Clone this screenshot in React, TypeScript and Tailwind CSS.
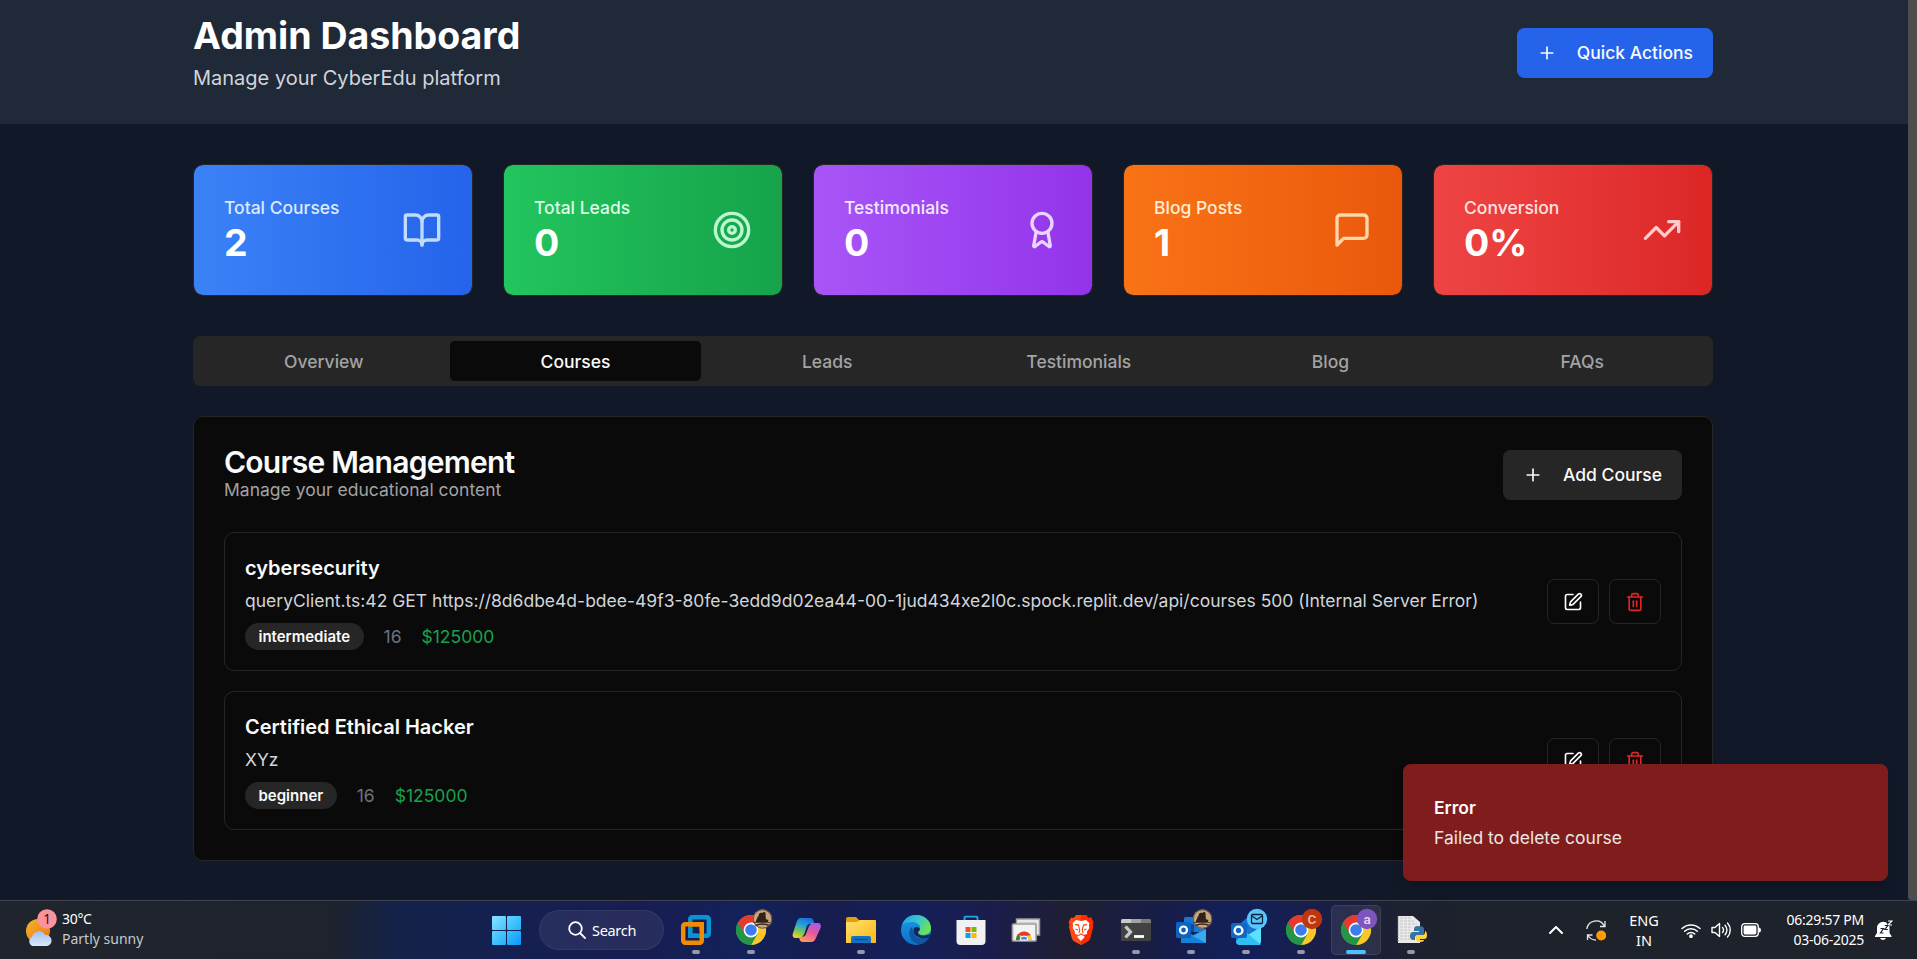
import React from "react";
import { Award, BookOpen, Plus, SquarePen, Target, Trash2, TrendingUp } from "lucide-react";

const stats = [
  { label: "Total Courses", value: "2", bg: "from-[#3b82f6] to-[#2563eb]", tone: "text-[#dbeafe]", icon: <BookOpen className="size-10 text-[#bfdbfe]" /> },
  { label: "Total Leads", value: "0", bg: "from-[#22c55e] to-[#16a34a]", tone: "text-[#dcfce7]", icon: <Target className="size-10 text-[#bbf7d0]" /> },
  { label: "Testimonials", value: "0", bg: "from-[#a855f7] to-[#9333ea]", tone: "text-[#f3e8ff]", icon: <Award className="size-10 text-[#e9d5ff]" /> },
  {
    label: "Blog Posts",
    value: "1",
    bg: "from-[#f97316] to-[#ea580c]",
    tone: "text-[#ffedd5]",
    icon: (
      <svg viewBox="0 0 24 24" className="size-10 text-[#fed7aa]" fill="none" stroke="currentColor" strokeWidth="2" strokeLinecap="round" strokeLinejoin="round">
        <path d="M21 15a2 2 0 0 1-2 2H7l-4 4V5a2 2 0 0 1 2-2h14a2 2 0 0 1 2 2z" />
      </svg>
    ),
  },
  { label: "Conversion", value: "0%", bg: "from-[#ef4444] to-[#dc2626]", tone: "text-[#fee2e2]", icon: <TrendingUp className="size-10 text-[#fecaca]" /> },
];

const tabs = ["Overview", "Courses", "Leads", "Testimonials", "Blog", "FAQs"];

const courses = [
  {
    title: "cybersecurity",
    desc: "queryClient.ts:42 GET https://8d6dbe4d-bdee-49f3-80fe-3edd9d02ea44-00-1jud434xe2l0c.spock.replit.dev/api/courses 500 (Internal Server Error)",
    level: "intermediate",
  },
  { title: "Certified Ethical Hacker", desc: "XYz", level: "beginner" },
];

function Header() {
  return (
    <header className="flex h-[124px] shrink-0 border-b border-[#1f2937] bg-[#1f2937] pt-[12.5px]">
      <div className="ml-[193px] flex h-20 w-[1520px] items-center justify-between">
        <div>
          <h1 className="text-[37.5px] leading-[45px] font-bold text-white">Admin Dashboard</h1>
          <p className="mt-[5px] text-[20px] leading-[30px] text-[#d1d5db]">Manage your CyberEdu platform</p>
        </div>
        <button className="flex h-[50px] items-center gap-5 rounded-[7.5px] bg-[#2563eb] px-5 text-[17.5px] font-medium text-[#f8fafc]">
          <Plus className="size-5" />
          <span className="pt-[2px]">Quick Actions</span>
        </button>
      </div>
    </header>
  );
}

function Stats() {
  return (
    <div className="grid grid-cols-5 gap-[30px]">
      {stats.map((s) => (
        <div key={s.label} className={`flex h-[132px] items-center justify-between rounded-[10px] border border-[#262626] bg-gradient-to-r bg-clip-padding px-[30px] ${s.bg}`}>
          <div>
            <p className={`text-[17.5px] leading-[25px] font-medium ${s.tone}`}>{s.label}</p>
            <p className="text-[37.5px] leading-[45px] font-bold text-white">{s.value}</p>
          </div>
          {s.icon}
        </div>
      ))}
    </div>
  );
}

function Tabs() {
  return (
    <div className="mt-10 grid h-[50px] grid-cols-6 rounded-[7.5px] bg-[#262626] p-[5px]">
      {tabs.map((t) => (
        <div
          key={t}
          className={`flex items-center justify-center rounded-[5px] pt-[2px] text-[17.5px] font-medium ${t === "Courses" ? "bg-[#0a0a0a] text-[#fafafa]" : "text-[#a3a3a3]"}`}
        >
          {t}
        </div>
      ))}
    </div>
  );
}

function CourseRow({ title, desc, level }: { title: string; desc: string; level: string }) {
  return (
    <div className="flex h-[139px] items-center justify-between rounded-[10px] border border-[#262626] px-5">
      <div>
        <h3 className="text-[20px] leading-[30px] font-semibold text-[#fafafa]">{title}</h3>
        <p className="mt-[5px] text-[17.5px] leading-[25px] text-[#d1d5db]">{desc}</p>
        <div className="mt-[10px] flex h-[27px] items-center gap-5 text-[17.5px]">
          <span className="flex h-[27px] items-center rounded-full bg-[#262626] px-[13.5px] pt-[1px] text-[15px] font-semibold text-[#fafafa]">{level}</span>
          <span className="pt-[2px] text-[#6b7280]">16</span>
          <span className="pt-[2px] text-[#16a34a]">$125000</span>
        </div>
      </div>
      <div className="flex gap-[10px]">
        <button className="flex h-[45px] w-[52px] items-center justify-center rounded-[7.5px] border border-[#262626] text-[#fafafa]">
          <SquarePen className="size-5" />
        </button>
        <button className="flex h-[45px] w-[52px] items-center justify-center rounded-[7.5px] border border-[#262626] text-[#dc2626]">
          <Trash2 className="size-5" />
        </button>
      </div>
    </div>
  );
}

function Courses() {
  return (
    <section className="mt-[30px] h-[445px] rounded-[10px] border border-[#262626] bg-[#0a0a0a] px-[30px] pt-[30px]">
      <div className="flex h-[56px] items-center justify-between">
        <div className="pb-[2px]">
          <h2 className="text-[30px] leading-[30px] font-semibold tracking-tight text-[#fafafa]">Course Management</h2>
          <p className="text-[17.5px] leading-[25px] text-[#a3a3a3]">Manage your educational content</p>
        </div>
        <button className="flex h-[50px] items-center gap-5 rounded-[7.5px] bg-[#262626] px-5 text-[17.5px] font-medium text-[#fafafa]">
          <Plus className="size-5" />
          Add Course
        </button>
      </div>
      <div className="mt-[29px] flex flex-col gap-5">
        {courses.map((c) => (
          <CourseRow key={c.title} {...c} />
        ))}
      </div>
    </section>
  );
}

function ChromeArt() {
  return (
    <g>
      <circle cx="15" cy="15" r="15" fill="#34a350" />
      <path d="M2 7.5A15 15 0 0 1 28 7.5H15L8.5 18.7Z" fill="#e8392f" />
      <path d="M28 7.5A15 15 0 0 1 15 30L21.5 18.7 21.5 11.2 15 7.5Z" fill="#fcc529" />
      <path d="M2 7.5A15 15 0 0 0 15 30L21.5 18.7H8.5Z" fill="#249447" />
      <circle cx="15" cy="15" r="7.4" fill="#fff" />
      <circle cx="15" cy="15" r="5.8" fill="#3b7df0" />
    </g>
  );
}

function PortraitBadge() {
  return (
    <g transform="translate(26.5 4)">
      <circle r="9.7" fill="#c9a67d" />
      <path d="M-8 4C-6 3-6-1-4-3c0-3 2-4 4-3 1-2 4-1 3 2 0 2 1 3 0 4l3 1-1 3H-7Z" fill="#30231c" />
      <path d="M-9.500 3.500H8" stroke="#5b4332" />
      <path d="M-7 6.500Q0 3.500 7 6.500" fill="none" stroke="#30231c" strokeWidth="1.500" />
      <circle r="9.200" fill="none" stroke="#57432f" strokeWidth=".8" />
    </g>
  );
}

function LetterBadge({ letter, fill, color }: { letter: string; fill: string; color: string }) {
  return (
    <g transform="translate(26 4)">
      <circle r="10.200" fill={fill} />
      <text y="4.600" textAnchor="middle" fontSize="13.500" fontWeight="600" fill={color} fontFamily="Roboto, sans-serif">{letter}</text>
    </g>
  );
}

function OutlookArt({ bright }: { bright?: boolean }) {
  return bright ? (
    <g>
      <path d="M5 12 17 2 30 12V26a4 4 0 0 1-4 4H9a4 4 0 0 1-4-4Z" fill="#1b72cf" />
      <path d="M5 27 30 12V26a4 4 0 0 1-4 4H9Z" fill="#5ce1fa" />
      <path d="M14 16 30 30H9a4 4 0 0 1-4-4Z" fill="#31bff2" />
      <rect y="8" width="16" height="15" rx="2" fill="#0f68c8" />
      <circle cx="7.500" cy="15.500" r="3.900" fill="none" stroke="#fff" strokeWidth="2.400" />
    </g>
  ) : (
    <g>
      <rect x="8" y="2" width="20" height="15" rx="1.500" fill="#1877d2" />
      <path d="M8 9h10v8H8z" fill="#0a4d9f" />
      <path d="M18 2h10v7H18z" fill="#35b8f1" />
      <path d="M5 14 17 20 30 14V28H5Z" fill="#1c8ce1" />
      <path d="M5 28 30 14V28Z" fill="#38a9ee" />
      <path d="M5 15 30 28H5Z" fill="#1680d8" />
      <rect y="7" width="15" height="16" rx="1.500" fill="#0c64c0" />
      <circle cx="7.500" cy="15" r="3.500" fill="none" stroke="#fff" strokeWidth="2.200" />
    </g>
  );
}

type App = { name: string; art: React.ReactNode; dot?: boolean; active?: boolean };

const apps: App[] = [
  {
    name: "VMware Workstation",
    dot: true,
    art: (
      <g fill="none" strokeWidth="4.400">
        <rect x="9.200" y="2.200" width="18.600" height="18.600" rx="2" stroke="#0895d6" />
        <rect x="2.200" y="9.200" width="18.600" height="18.600" rx="2" stroke="#f38b00" />
        <path d="M9.200 13V20.800H16" stroke="#0895d6" />
        <path d="M7 9.200H20.800V16" stroke="#f38b00" />
      </g>
    ),
  },
  { name: "Chrome", dot: true, art: <g><ChromeArt /><PortraitBadge /></g> },
  {
    name: "Copilot",
    art: (
      <g transform="translate(1 2)">
        <path d="M9 1h9c2 0 3 1 3.500 3l1 3h-3c-3 0-4 2-5 5l-2 6c-1 2-2 3-4 3H4c-3 0-4-2-3-5L5 4c1-2 2-3 4-3Z" fill="url(#copA)" />
        <path d="M19 25h-8c-2 0-3-1-3.500-3l-1-2h3c3 0 4-2 5-5l2-5c1-2 2-4 5-4h4c3 0 4 2 3 5l-5 11c-1 2-2 3-4.500 3Z" fill="url(#copB)" />
        <path d="M15 8.500 17 7h2c-2 1-3 4-4 7l-1.500 4-2 1.500h-1.500c2-1 2.500-3 3.500-6Z" fill="#182055" />
      </g>
    ),
  },
  {
    name: "File Explorer",
    dot: true,
    art: (
      <g>
        <path d="M0 4q0-2 2-2h8l3 3h15q2 0 2 2v6H0Z" fill="#e0a008" />
        <path d="M0 7h11l3-2h15q1 0 1 1v22H0Z" fill="url(#folder)" />
        <path d="M5 28v-5q0-2 2-2h16q2 0 2 2v5Z" fill="#1272c4" />
        <path d="M9 24.500h12" stroke="#0b4f91" strokeWidth="1.300" strokeLinecap="round" />
      </g>
    ),
  },
  {
    name: "Edge",
    art: (
      <g>
        <circle cx="15" cy="15" r="15" fill="url(#edgeA)" />
        <path d="M1 10C4 2 10 0 15 0c9 0 15 6 15 13 0 5-4 7-8 7-3 0-5-1-5-3 0-1 2-2 2-5 0-3-4-5-8-5C6 7 3 8 1 10Z" fill="url(#edgeB)" />
        <path d="M11 12C6 16 8 28 19 29c4-1 7-3 9-7-6 3-14 2-16-5-.5-2-.5-4-1-5Z" fill="#1055a0" />
        <path d="M13 13c2-2 5-1 6 1 0 2-2 2-2 4 2 4 8 3 13 1l-1.500 3c-4 2-9 2-13-1-3-2-3.500-5-2.500-8Z" fill="#16255c" />
      </g>
    ),
  },
  {
    name: "Microsoft Store",
    art: (
      <g>
        <path d="M8.500 6V2.600q0-1 1-1h11q1 0 1 1V6" fill="none" stroke="#20a9ea" strokeWidth="1.900" />
        <path d="M.5 5h29v21q0 4-4 4H4.500q-4 0-4-4Z" fill="#f1f1f2" />
        <path d="M9.500 12h5v5h-5z" fill="#f25022" />
        <path d="M15.500 12h5v5h-5z" fill="#7fba00" />
        <path d="M9.500 18h5v5h-5z" fill="#00a4ef" />
        <path d="M15.500 18h5v5h-5z" fill="#ffb900" />
      </g>
    ),
  },
  {
    name: "Chrome Remote Desktop",
    art: (
      <g>
        <rect x="5.500" y="4" width="23" height="16" fill="#e8e8e8" stroke="#9a9a9a" strokeWidth="1.500" />
        <path d="M8 8h17v9" fill="none" stroke="#b9b9b9" />
        <rect x="1.500" y="9" width="23.500" height="17" rx="1" fill="#f3f3f3" stroke="#a0a0a0" strokeWidth="1.700" />
        <path d="M5 25a8 8 0 0 1 16 0Z" fill="#fcc934" />
        <path d="M5 25a8 8 0 0 1 2-6l4 6Z" fill="#1e8e3e" />
        <path d="M6.300 20.200a8 8 0 0 1 13.500 0L13 21Z" fill="#df3b31" />
        <path d="M9 25a4 4 0 0 1 8 0Z" fill="#4285f4" stroke="#fff" />
      </g>
    ),
  },
  {
    name: "Brave",
    art: (
      <g transform="translate(2.500 0) scale(.833 1)">
        <path d="M9 0h12l3 3 3-.500 3 5-1.300 2 .8 2-3.500 12-2 2.500L15 30l-9-4-2-2.500-3.500-12 .8-2L0 7.500 3 2.500 6 3Z" fill="#fb4a14" />
        <path d="M15 0h6l3 3 3-.500 3 5-1.300 2 .8 2-3.500 12-2 2.500L15 30Z" fill="#ff2a00" />
        <path d="M5 8l4-3 6 1 6-1 4 3-.5 3 .5 2-3 4 .5 2-5 1 2 2-4.500 4L10.500 22l2-2-5-1 .5-2-3-4 .5-2Z" fill="#fff" />
        <path d="M8 9.500l4 .500 1.500 5-1 3M22 9.500l-4 .500-1.500 5 1 3M8.500 14l3 1M21.500 14l-3 1M12 20.500l3-1.500 3 1.500" fill="none" stroke="#fb4412" strokeWidth="1.300" />
      </g>
    ),
  },
  {
    name: "Terminal",
    dot: true,
    art: (
      <g>
        <rect y="4" width="30" height="22" rx="1.500" fill="#424242" />
        <path d="M0 5.500Q0 4 1.500 4H10v4H0Z" fill="#c9c9c9" />
        <path d="M10 4h10v4H10z" fill="#a3a3a3" />
        <path d="M20 4h8.500Q30 4 30 5.500V8H20Z" fill="#7c7c7c" />
        <path d="m4.500 11.500 5 5.500-5 5.500" fill="none" stroke="#c8c8c8" strokeWidth="3.300" />
        <path d="M13 21.500h10" stroke="#fff" strokeWidth="2.800" />
      </g>
    ),
  },
  { name: "Outlook", dot: true, art: <g><OutlookArt /><PortraitBadge /></g> },
  {
    name: "Outlook Mail",
    dot: true,
    art: (
      <g>
        <OutlookArt bright />
        <circle cx="26" cy="4" r="10.200" fill="#58c5fb" />
        <rect x="20.500" y="-.5" width="11" height="9" rx="1" fill="none" stroke="#0c2437" strokeWidth="1.300" />
        <path d="m21 1 5 3.500L31 1" fill="none" stroke="#0c2437" strokeWidth="1.300" />
      </g>
    ),
  },
  { name: "Chrome C", dot: true, art: <g><ChromeArt /><LetterBadge letter="C" fill="#bd360c" color="#e5bbaa" /></g> },
  { name: "Chrome a", active: true, art: <g><ChromeArt /><LetterBadge letter="a" fill="#7d55bd" color="#e2d7f1" /></g> },
  {
    name: "Python",
    dot: true,
    art: (
      <g>
        <path d="M2 1h15l7 6v21H2Z" fill="#e9e9e9" />
        <path d="M4 3h11M4 6h14M4 9h17M4 12h12M4 15h10M4 18h12M4 21h14M4 24h17" stroke="#c4c4c4" strokeDasharray="3 1" />
        <path d="M2 1v27" stroke="#888" strokeDasharray="1.500 1.500" />
        <path d="M22 11c-3 0-4 1-4 3v2h5v1h-6c-2 0-3 2-3 4s1 4 3 4h2v-2c0-2 1-3 3-3h4c1.500 0 2-1 2-2v-4c0-2-2-3-6-3Z" fill="#3672a4" />
        <path d="M24 27c-3 0-4-1-4-3v-2c0-1 1-2 2-2h4c2 0 3-1 3-3v-1c1 0 2 2 2 4 0 3-1 4-3 4h-4v1h4c0 1-1 2-4 2Z" fill="#fdd23d" />
      </g>
    ),
  },
];

function AppIcon({ app }: { app: App }) {
  return (
    <div
      title={app.name}
      className={`relative flex h-[50px] w-[50px] items-center justify-center rounded-[5px] border ${app.active ? "border-white/8 bg-white/8" : "border-transparent"}`}
    >
      <svg viewBox="0 0 30 30" className="size-[30px] overflow-visible">{app.art}</svg>
      {app.dot && <span className="absolute bottom-0 left-5 h-1 w-2 rounded-full bg-[#9699ae]" />}
      {app.active && <span className="absolute bottom-0 left-[14px] h-1 w-5 rounded-full bg-[#4cc2ff]" />}
    </div>
  );
}

function Taskbar() {
  return (
    <div className="flex h-[59px] shrink-0 items-center border-t border-[#3f4450] bg-[linear-gradient(90deg,#1f242d_0px,#1e232c_330px,#14224a_395px,#14214f_480px,#181d51_640px,#12225a_745px,#181c4e_830px,#14205a_900px,#1b1d4a_1000px,#1f1f33_1070px,#171d4b_1170px,#12205a_1240px,#1a1e43_1340px,#1e2131_1400px,#1d222b_1480px,#1d222b_1917px)] font-['Noto_Sans',sans-serif] text-[14.5px] leading-5 text-white">
      <div className="flex w-[481px] items-center gap-[8px] pb-[2px] pl-[25px]">
        <svg viewBox="0 0 32 38" className="h-[38px] w-[32px] overflow-visible">
          <circle cx="13" cy="21" r="12" fill="url(#sun)" />
          <path d="M7 36a5 5 0 0 1 0-9 7 7 0 0 1 13-2 5.500 5.500 0 0 1 2 11Z" fill="url(#cloud)" />
          <circle cx="22" cy="9" r="9.800" fill="#fb929d" />
          <text x="22" y="14" textAnchor="middle" fontSize="13.500" fill="#241b1e">1</text>
        </svg>
        <div className="-ml-[3px] text-[14px]">
          <div className="tracking-[-0.3px]">30°C</div>
          <div className="text-[#c6c9cd]">Partly sunny</div>
        </div>
      </div>
      <div className="flex items-center gap-[5px]">
        <div className="flex size-[50px] items-center justify-center">
          <svg viewBox="0 0 29 29" className="size-[29px]" fill="url(#win)">
            <rect width="14" height="14" rx="1" />
            <rect x="15" width="14" height="14" rx="1" />
            <rect y="15" width="14" height="14" rx="1" />
            <rect x="15" y="15" width="14" height="14" rx="1" />
          </svg>
        </div>
        <div className="ml-[3px] mr-[2px] flex h-10 w-[125px] items-center gap-[6px] rounded-full border border-white/5 bg-white/7 pl-[28px]">
          <svg viewBox="0 0 18 18" className="size-[18px]" fill="none" stroke="#fff" strokeWidth="1.800">
            <circle cx="7.500" cy="7.500" r="6.300" />
            <path d="m12 12 5 5" strokeLinecap="round" />
          </svg>
          <span className="tracking-[-0.3px]">Search</span>
        </div>
        {apps.map((a) => (
          <AppIcon key={a.name} app={a} />
        ))}
      </div>
      <div className="ml-auto flex items-center pr-[24px]">
        <svg viewBox="0 0 14 8" className="h-2 w-[14px]" fill="none" stroke="#fff" strokeWidth="2" strokeLinecap="round">
          <path d="M1 7 7 1l6 6" />
        </svg>
        <svg viewBox="0 0 20 21" className="ml-[23px] h-[21px] w-[20px]" fill="none" stroke="#e8e8e8" strokeWidth="1.300">
          <path d="M.8 9A9.300 9.300 0 0 1 18.300 6M19 1v5.500h-5M10 20a9.300 9.300 0 0 1-8-4.500M1.500 20v-5h5" />
          <circle cx="15.200" cy="15.500" r="5" fill="#ff9c05" stroke="none" />
        </svg>
        <div className="ml-[23px] w-[30px] pb-[1px] text-center">
          <div>ENG</div>
          <div>IN</div>
        </div>
        <svg viewBox="0 0 20 15" className="ml-[22px] h-[15px] w-[20px]" fill="none" stroke="#fff" strokeWidth="1.500" strokeLinecap="round">
          <path d="M1 5.500a13 13 0 0 1 18 0M3.700 8.300a9 9 0 0 1 12.600 0M6.300 11a5.300 5.300 0 0 1 7.400 0" />
          <circle cx="10" cy="13.200" r="1.100" fill="#fff" />
        </svg>
        <svg viewBox="0 0 20 16" className="ml-[10px] h-[16px] w-[20px]" fill="none" stroke="#fff" strokeWidth="1.400" strokeLinecap="round" strokeLinejoin="round">
          <path d="M1 5.500h3L8.500 1.500v13L4 10.500H1ZM11.500 5.500a3.500 3.500 0 0 1 0 5M14 3.200a7 7 0 0 1 0 9.600M16.500 1a10.300 10.300 0 0 1 0 14" />
        </svg>
        <svg viewBox="0 0 20 14" className="ml-[10px] h-[14px] w-[20px]">
          <rect x=".7" y=".7" width="16.600" height="12.600" rx="3" fill="none" stroke="#fff" strokeWidth="1.300" />
          <rect x="2.600" y="2.600" width="12.800" height="8.800" rx="1.400" fill="#fff" />
          <path d="M18 4.500q2 0 2 2.500t-2 2.500Z" fill="#fff" />
        </svg>
        <div className="ml-[17px] flex w-[86px] flex-col items-end pb-[1px] text-[14px] tracking-[-0.25px] whitespace-nowrap">
          <div>06:29:57 PM</div>
          <div>03-06-2025</div>
        </div>
        <svg viewBox="0 0 18 20" className="ml-[11px] h-[20px] w-[18px]">
          <path d="M2 8a6.200 6.200 0 0 1 12.500 0v5l2 3v1H0v-1l2-3Z" fill="#fff" />
          <path d="M5 18h6q-1 2-3 2t-3-2Z" fill="#fff" />
          <path d="M12 0h6v6h-6z" fill="#1d222b" />
          <path d="M13 1h4l-4 4h4" fill="none" stroke="#fff" strokeWidth="1.200" />
          <path d="M9.800 5.500h3l-3 4h3M5.500 8.500h3l-3 4.500h3" fill="none" stroke="#1d222b" strokeWidth="1.200" />
        </svg>
      </div>
    </div>
  );
}

function Gradients() {
  return (
    <svg className="absolute size-0" aria-hidden="true">
      <defs>
        <linearGradient id="win" gradientUnits="userSpaceOnUse" x1="0" y1="0" x2="29" y2="29">
          <stop stopColor="#8be3ff" /><stop offset=".5" stopColor="#3fc3ff" /><stop offset="1" stopColor="#0a94fb" />
        </linearGradient>
        <linearGradient id="sun" x1="0" y1="0" x2="1" y2="1"><stop stopColor="#f3b62c" /><stop offset="1" stopColor="#f0700f" /></linearGradient>
        <linearGradient id="cloud" x1="0" y1="0" x2="0" y2="1"><stop stopColor="#9fc1f5" /><stop offset="1" stopColor="#dbe7fb" /></linearGradient>
        <linearGradient id="folder" x1="0" y1="0" x2="1" y2="1"><stop stopColor="#ffdf6b" /><stop offset="1" stopColor="#fbb916" /></linearGradient>
        <linearGradient id="copA" x1=".6" y1="0" x2=".2" y2="1"><stop stopColor="#1d6fe0" /><stop offset=".35" stopColor="#20a3d8" /><stop offset=".7" stopColor="#7ec850" /><stop offset="1" stopColor="#f8cf2a" /></linearGradient>
        <linearGradient id="copB" x1=".8" y1="0" x2=".3" y2="1"><stop stopColor="#a35be8" /><stop offset=".5" stopColor="#e7599f" /><stop offset="1" stopColor="#ff9a5c" /></linearGradient>
        <linearGradient id="edgeA" x1="0" y1="0" x2="0" y2="1"><stop stopColor="#1b9de2" /><stop offset="1" stopColor="#0e6fc9" /></linearGradient>
        <linearGradient id="edgeB" x1="0" y1="0" x2="1" y2=".5"><stop stopColor="#1d9fe6" /><stop offset=".5" stopColor="#35c4d7" /><stop offset="1" stopColor="#6be353" /></linearGradient>
      </defs>
    </svg>
  );
}

export default function App() {
  return (
    <div className="flex h-[959px] w-[1917px] flex-col overflow-hidden bg-[#111827] font-['Inter',sans-serif]">
      <Gradients />
      <div className="relative flex h-[900px] shrink-0">
        <div className="flex w-[1908px] flex-col">
          <Header />
          <main className="ml-[193px] w-[1520px] pt-10">
            <Stats />
            <Tabs />
            <Courses />
          </main>
        </div>
        <div className="w-[9px] rounded-bl-[3px] bg-[#4d4d4d]" />
        <div className="absolute top-[764px] left-[1403px] h-[117px] w-[485px] rounded-[7.5px] border border-[#7f1d1d] bg-[#7f1d1d] p-[30px] text-[17.5px] leading-[25px] text-[#fafafa] shadow-lg">
          <div className="font-semibold">Error</div>
          <div className="mt-[5px] opacity-90">Failed to delete course</div>
        </div>
      </div>
      <Taskbar />
    </div>
  );
}
